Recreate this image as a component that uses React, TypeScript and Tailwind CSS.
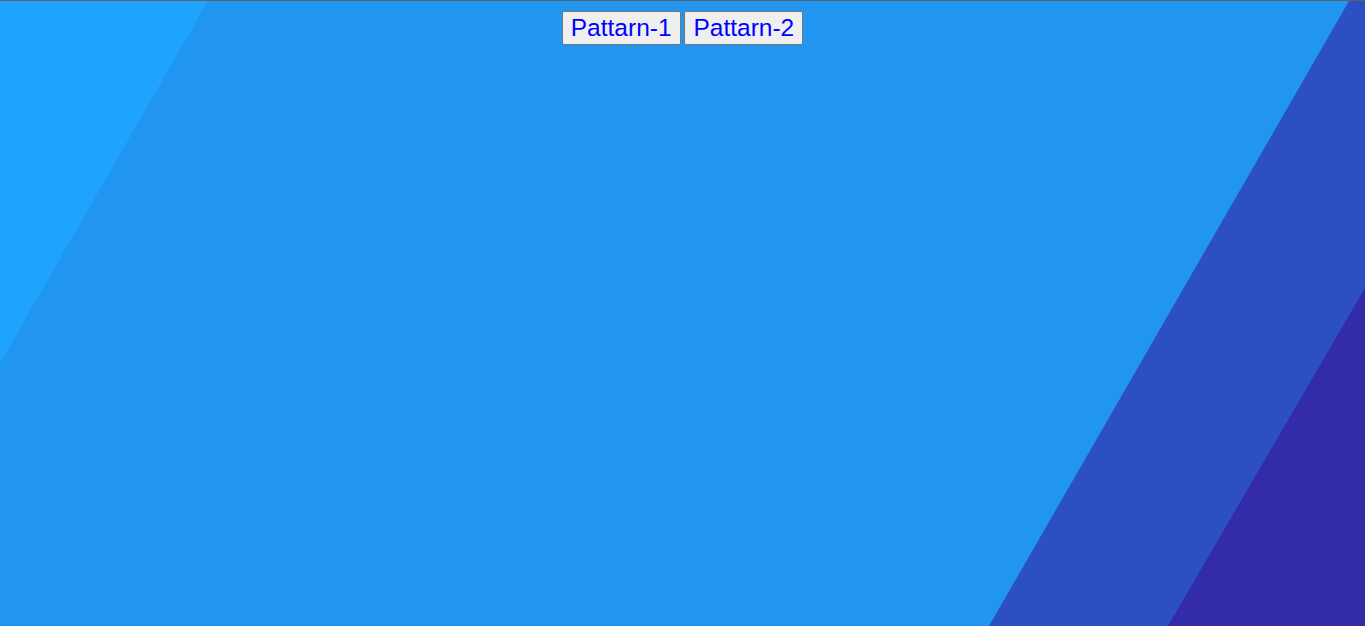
import React from "react";

export default function App() {
  return (
    <div className="relative h-[626px] w-full overflow-hidden border-t border-[#5b5f66] bg-[#2196f0]">
      <svg
        className="absolute inset-0 h-full w-full"
        viewBox="0 0 1365 625"
        preserveAspectRatio="none"
      >
        <rect x="0" y="0" width="1365" height="625" fill="#2196f0" />
        <polygon points="0,0 208,0 0,362" fill="#1ea3ff" />
        <polygon points="1349,0 1365,0 1365,625 989,625" fill="#2c4fc2" />
        <polygon points="1365,287 1365,625 1168,625" fill="#332ba8" />
      </svg>
      <div className="relative pt-[10px] text-center font-['Liberation_Sans',Arial,sans-serif] text-[14px]">
        <button className="rounded-[2px] border border-[#767676] bg-[#efefef] px-[8px] py-px text-[24.5px] leading-[30px] text-[#0000ff]">
          Pattarn-1
        </button>{" "}
        <button className="rounded-[2px] border border-[#767676] bg-[#efefef] px-[8px] py-px text-[24.5px] leading-[30px] text-[#0000ff]">
          Pattarn-2
        </button>
      </div>
    </div>
  );
}
